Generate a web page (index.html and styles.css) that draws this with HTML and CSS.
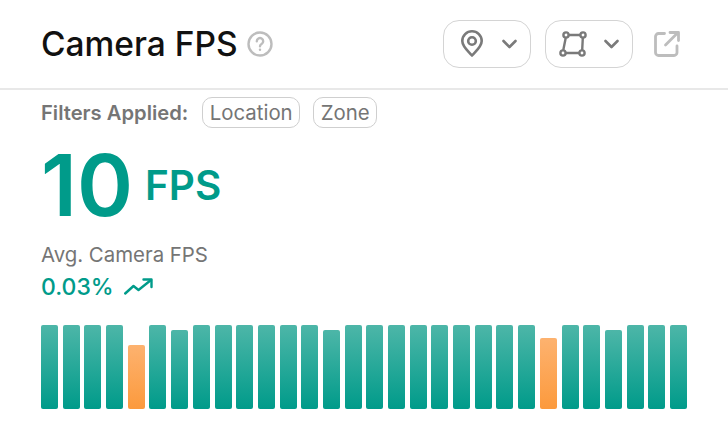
FILE: index.html
```html
<!DOCTYPE html>
<html lang="en">
<head>
    <meta charset="UTF-8">
    <title>Camera FPS</title>
    <link rel="stylesheet" href="styles.css">
</head>
<body>
    <div class="card">
        <div class="header">
            <div class="title-group">
                <h1>Camera FPS</h1>
                <svg class="help" width="26" height="26" viewBox="0 0 26 26" fill="none" stroke="#bdbdbd" stroke-width="2.400" stroke-linecap="round">
                    <circle cx="13" cy="13" r="11.500"/>
                    <path d="M9.800 10.200a3.200 3.200 0 1 1 4.800 2.800c-1 .6-1.600 1.200-1.600 2.200"/>
                    <path d="M13 18.600v.1"/>
                </svg>
            </div>
            <div class="actions">
                <button class="select-btn">
                    <svg width="26" height="30" viewBox="0 0 26 30" fill="none" stroke="#7a7a7a" stroke-width="2.600" stroke-linejoin="round">
                        <path d="M12 26.500C7.500 21.500 2.300 17.500 2.300 12a9.700 9.700 0 0 1 19.400 0c0 5.500-5.200 9.500-9.700 14.500z"/>
                        <circle cx="12" cy="12" r="3.800"/>
                    </svg>
                    <svg class="chev" width="15" height="10" viewBox="0 0 15 10" fill="none" stroke="#7a7a7a" stroke-width="2.600" stroke-linecap="round" stroke-linejoin="round"><path d="M1.500 2l6 6 6-6"/></svg>
                </button>
                <button class="select-btn">
                    <svg class="zone-icon" width="28" height="28" viewBox="0 0 28 28" fill="none" stroke="#7a7a7a" stroke-width="2.400">
                        <path d="M10 5h11M23.800 8l-.6 12M20 23H7M4.300 20l2.400-12"/>
                        <circle cx="7" cy="5" r="2.600"/>
                        <circle cx="24" cy="5" r="2.600"/>
                        <circle cx="23" cy="23" r="2.600"/>
                        <circle cx="4" cy="23" r="2.600"/>
                    </svg>
                    <svg class="chev" width="15" height="10" viewBox="0 0 15 10" fill="none" stroke="#7a7a7a" stroke-width="2.600" stroke-linecap="round" stroke-linejoin="round"><path d="M1.500 2l6 6 6-6"/></svg>
                </button>
                <svg class="open-link" width="28" height="28" viewBox="0 0 28 28" fill="none" stroke="#bdbdbd" stroke-width="2.800" stroke-linecap="round" stroke-linejoin="round">
                    <path d="M12.500 3.500h-6a3 3 0 0 0-3 3v16a3 3 0 0 0 3 3H22a3 3 0 0 0 3-3V16"/>
                    <path d="M13.500 15L26 2.500M18 2.500h8.500v8"/>
                </svg>
            </div>
        </div>
        <div class="filters">
            <span class="filters-label">Filters Applied:</span>
            <span class="chip">Location</span>
            <span class="chip">Zone</span>
        </div>
        <div class="metric">
            <span class="metric-value">10</span>
            <span class="metric-unit">FPS</span>
        </div>
        <div class="metric-label">Avg. Camera FPS</div>
        <div class="trend">
            <span>0.03%</span>
            <svg width="30" height="18" viewBox="0 0 30 18" fill="none" stroke="#009b8a" stroke-width="2.400" stroke-linecap="round" stroke-linejoin="round">
                <path d="M1.200 15.500L9.500 8l5 4L27 2"/>
                <path d="M19.500 1.500H27.500V9"/>
            </svg>
        </div>
        <div class="bars">
            <div class="bar"></div>
            <div class="bar"></div>
            <div class="bar"></div>
            <div class="bar"></div>
            <div class="bar warn"></div>
            <div class="bar"></div>
            <div class="bar short"></div>
            <div class="bar"></div>
            <div class="bar"></div>
            <div class="bar"></div>
            <div class="bar"></div>
            <div class="bar"></div>
            <div class="bar"></div>
            <div class="bar short"></div>
            <div class="bar"></div>
            <div class="bar"></div>
            <div class="bar"></div>
            <div class="bar"></div>
            <div class="bar"></div>
            <div class="bar"></div>
            <div class="bar"></div>
            <div class="bar"></div>
            <div class="bar"></div>
            <div class="bar warn-tall"></div>
            <div class="bar"></div>
            <div class="bar"></div>
            <div class="bar short"></div>
            <div class="bar"></div>
            <div class="bar"></div>
            <div class="bar"></div>
        </div>
    </div>
</body>
</html>
```

FILE: styles.css
```css
body {
    margin: 0;
    background-color: #ffffff;
    font-family: Inter, "Liberation Sans", sans-serif;
}
.card {
    width: 728px;
    height: 440px;
    overflow: hidden;
}
.header {
    display: flex;
    justify-content: space-between;
    align-items: center;
    height: 88px;
    padding: 0 48px 0 41px;
    border-bottom: 2px solid #e8e8e8;
}
.title-group {
    display: flex;
    align-items: center;
    gap: 9px;
}
h1 {
    margin: 0;
    font-size: 33.500px;
    font-weight: 500;
    color: #111111;
}
.actions {
    display: flex;
    align-items: center;
    gap: 14px;
}
.select-btn {
    display: flex;
    align-items: center;
    justify-content: space-between;
    width: 88px;
    height: 48px;
    padding: 0 13px 0 16px;
    background: none;
    border: 1px solid #d4d4d4;
    border-radius: 16px;
}
.zone-icon {
    margin-left: -3px;
}
.open-link {
    margin-left: 5px;
}
.filters {
    display: flex;
    align-items: center;
    gap: 13px;
    margin: 7px 0 0 41px;
    font-size: 20.400px;
    color: #757575;
}
.filters-label {
    font-size: 20.200px;
    font-weight: 600;
    margin-right: 1px;
}
.chip {
    padding: 1.500px 6.500px;
    line-height: 26px;
    border: 1px solid #cfcfcf;
    border-radius: 10px;
}
.metric {
    display: flex;
    align-items: center;
    gap: 12px;
    margin: 14px 0 0 41px;
    color: #009b8a;
    line-height: 88px;
}
.metric-value {
    font-size: 85px;
    font-weight: 600;
}
.metric-unit {
    font-size: 40.500px;
    font-weight: 600;
}
.metric-label {
    margin: 12px 0 0 41px;
    font-size: 20.400px;
    color: #757575;
}
.trend {
    display: flex;
    align-items: center;
    gap: 10px;
    margin: 6px 0 0 41px;
    font-size: 23px;
    font-weight: 500;
    color: #009b8a;
}
.bars {
    display: flex;
    justify-content: space-between;
    align-items: flex-end;
    height: 84px;
    margin: 24px 41px 0;
}
.bar {
    width: 17px;
    height: 84px;
    border-radius: 2px;
    background: linear-gradient(#4db6a8, #009b8a);
}
.short {
    height: 79px;
}
.warn {
    height: 64px;
    background: linear-gradient(#fdb26f, #fc9a3d);
}
.warn-tall {
    height: 71px;
    background: linear-gradient(#fdb26f, #fc9a3d);
}
```
